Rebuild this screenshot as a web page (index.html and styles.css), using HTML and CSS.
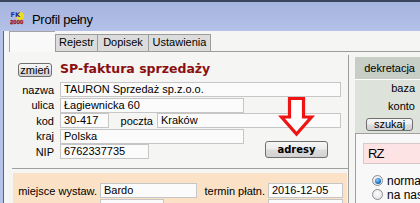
FILE: index.html
```html
<!DOCTYPE html>
<html lang="pl">
<head>
<meta charset="utf-8">
<title>Profil pełny</title>
<link rel="stylesheet" href="styles.css">
</head>
<body>
<div class="win">
  <div class="titlebar">
    <svg class="appicon" width="14" height="14" viewBox="0 0 14 14">
      <circle cx="10" cy="5" r="4" fill="#f0dc1c"/>
      <text x="0.5" y="6.3" class="ico-fk">FK</text>
      <text x="0" y="13.2" class="ico-yr">2000</text>
    </svg>
    <span class="title-text">Profil pełny</span>
  </div>
  <div class="frame">
    <div class="edge"></div>
    <div class="client">
      <div class="tabs">
        <div class="tab sel"></div>
        <div class="tab t1">Rejestr</div>
        <div class="tab t2">Dopisek</div>
        <div class="tab t3">Ustawienia</div>
        <div class="tab-fill"></div>
      </div>
      <div class="page">
        <div class="main">
          <div class="head">
            <button class="btn zmien">zmień</button>
            <span class="doc-title">SP-faktura sprzedaży</span>
          </div>
          <div class="form">
            <div class="row"><span class="lbl">nazwa</span><span class="box w-nazwa">TAURON Sprzedaż sp.z.o.o.</span></div>
            <div class="row"><span class="lbl">ulica</span><span class="box w-ulica">Łagiewnicka 60</span></div>
            <div class="row"><span class="lbl">kod</span><span class="box w-kod">30-417</span><span class="lbl-poczta">poczta</span><span class="box w-poczta">Kraków</span></div>
            <div class="pair">
              <div class="pair-rows">
                <div class="row"><span class="lbl">kraj</span><span class="box w-kraj">Polska</span></div>
                <div class="row"><span class="lbl">NIP</span><span class="box w-nip">6762337735</span></div>
              </div>
              <button class="btn adresy">adresy</button>
            </div>
          </div>
          <svg class="arrow" width="40" height="45" viewBox="0 0 40 45">
            <polygon points="11.5,3.5 25.5,3.5 25.5,22 33.5,22 18.5,39 3.5,22 11.5,22" fill="#ffffff" stroke="#ee1414" stroke-width="3.2" stroke-linejoin="miter"/>
          </svg>
          <div class="sep"></div>
          <div class="dates">
            <div class="drow"><span class="dl1">miejsce wystaw.</span><span class="box w-miejsce">Bardo</span><span class="dl2">termin płatn.</span><span class="box w-termin">2016-12-05</span></div>
            <div class="drow"><span class="dl1"></span><span class="box w-data"></span><span class="dl2"></span><span class="box w-termin"></span></div>
          </div>
        </div>
        <div class="vline"></div>
        <div class="side">
          <div class="side-head">dekretacja</div>
          <div class="side-body">
            <div class="side-line">baza</div>
            <div class="side-line">konto</div>
            <button class="btn szukaj">szukaj</button>
          </div>
          <div class="side-group">
            <div class="rz">RZ</div>
            <div class="radio-row"><span class="radio on"></span><span class="rtext">normalna</span></div>
            <div class="radio-row"><span class="radio"></span><span class="rtext">na nasz</span></div>
          </div>
        </div>
      </div>
    </div>
  </div>
</div>
</body>
</html>
```
FILE: styles.css
```css
* { box-sizing: border-box; }
html, body { margin: 0; padding: 0; }
body {
  width: 420px;
  height: 203px;
  overflow: hidden;
  font-family: "Liberation Sans", Arial, sans-serif;
  font-size: 11px;
  color: #000;
  background: #f5f5f3;
}
.win { width: 420px; height: 203px; display: flex; flex-direction: column; overflow: hidden; }

.titlebar {
  height: 31px;
  flex: none;
  border-top: 2px solid #3a4660;
  background: linear-gradient(#a5b4de, #b4c1e9);
  display: flex;
  align-items: flex-start;
  padding: 9px 0 0 10px;
}
.appicon { display: block; flex: none; }
.ico-fk { font-family: "DejaVu Sans", sans-serif; font-weight: bold; font-size: 6.5px; fill: #1a2db4; }
.ico-yr { font-family: "Liberation Sans", sans-serif; font-weight: bold; font-size: 6px; fill: #e01818; stroke: #701010; stroke-width: 0.3px; }
.title-text {
  margin-left: 8px;
  margin-top: 2px;
  font-size: 13px;
  line-height: 14px;
  letter-spacing: -0.3px;
  color: #000;
}

.frame { flex: 1; display: flex; min-height: 0; }
.edge { width: 4px; flex: none; background: #b5c3ea; border-right: 1px solid #5b6479; }
.client { flex: 1; padding-left: 5px; display: flex; flex-direction: column; min-width: 0; }

.tabs { height: 21px; flex: none; display: flex; align-items: flex-end; }
.tab {
  height: 18px;
  background: #dcdcdc;
  border: 1px solid #9c9c9c;
  border-left: none;
  line-height: 15px;
  text-align: center;
  white-space: nowrap;
}
.tab.sel {
  width: 46px;
  height: 21px;
  background: #f9f9f9;
  border: 1px solid #a4a4a4;
  border-right: none;
  border-bottom: none;
}
.tab.t1 { width: 43px; border-left: 1px solid #9c9c9c; }
.tab.t2 { width: 51px; }
.tab.t3 { width: 62px; }
.tab-fill { flex: 1; height: 1px; background: #9c9c9c; }

.page { flex: 1; display: flex; min-height: 0; }
.main { width: 336px; flex: none; margin-left: 3px; position: relative; padding-top: 11px; }
.vline { width: 1px; flex: none; background: #9c9c9c; margin-top: 3px; }
.side { width: 65px; flex: none; margin-left: 6px; display: flex; flex-direction: column; }

.btn {
  font-family: "Liberation Sans", Arial, sans-serif;
  font-size: 11px;
  color: #000;
  border: 1px solid #707070;
  border-radius: 3px;
  background: linear-gradient(#f6f6f6 0%, #ececec 48%, #dcdcdc 52%, #d2d2d2 100%);
  padding: 0;
  margin: 0;
  display: block;
  text-align: center;
}

.head { display: flex; align-items: center; height: 14px; padding-left: 6px; }
.zmien { width: 34px; height: 14px; line-height: 12px; }
.doc-title {
  margin-left: 8px;
  font-family: "DejaVu Sans", sans-serif;
  font-weight: bold;
  font-size: 12.5px;
  line-height: 14px;
  color: #8a1010;
  white-space: nowrap;
  position: relative;
  top: -1px;
}

.form { margin-top: 5px; display: flex; flex-direction: column; gap: 0.5px; }
.row { display: flex; height: 15px; align-items: center; }
.lbl { width: 42px; text-align: right; margin-right: 6px; white-space: nowrap; }
.box {
  height: 15px;
  border: 1px solid #c6c6c6;
  background: #fbfbfb;
  padding-left: 3px;
  line-height: 13px;
  white-space: nowrap;
  overflow: hidden;
}
.w-nazwa { width: 281px; }
.w-ulica { width: 184px; }
.w-kod { width: 49px; }
.lbl-poczta { width: 44px; text-align: right; margin-right: 4px; }
.w-poczta { width: 184px; }
.w-kraj { width: 184px; }
.w-nip { width: 89px; }

.pair { display: flex; align-items: flex-start; }
.pair-rows { display: flex; flex-direction: column; gap: 0.5px; }
.adresy {
  margin-left: 21px;
  margin-top: 12px;
  width: 63px;
  height: 17px;
  font-family: "DejaVu Sans", sans-serif;
  font-weight: bold;
  font-size: 10px;
  line-height: 15px;
}

.arrow { position: absolute; left: 266px; top: 43px; }

.sep { height: 1px; background: #a0a0a0; margin-top: 9px; }
.dates {
  margin-top: 4px;
  margin-left: 1px;
  width: 334px;
  height: 40px;
  background: #fbe1c6;
  padding-top: 10px;
  display: flex;
  flex-direction: column;
  gap: 1px;
}
.drow { display: flex; height: 15px; align-items: center; flex: none; }
.dl1 { width: 84px; text-align: right; margin-right: 3px; white-space: nowrap; }
.dl2 { width: 68px; text-align: right; margin-right: 3px; white-space: nowrap; }
.w-miejsce { width: 97px; }
.w-termin { width: 75px; }
.w-data { width: 64px; margin-right: 33px; }

.side-head {
  margin-top: 5px;
  height: 22px;
  background: #c6cec5;
  text-align: right;
  padding-right: 5px;
  line-height: 22px;
}
.side-body {
  border-top: 1px solid #ffffff;
  background: #dde3db;
  height: 54px;
  padding-right: 5px;
  display: flex;
  flex-direction: column;
  align-items: flex-end;
}
.side-line { line-height: 17.5px; height: 17.5px; }
.szukaj { width: 47px; height: 13px; line-height: 11px; margin-top: 3px; margin-right: 2px; }

.side-group {
  flex: 1;
  border-top: 1px solid #a0a0a0;
  border-left: 1px solid #a0a0a0;
  background: #f8f8f8;
  padding: 9px 0 0 7px;
  overflow: hidden;
}
.rz {
  height: 21px;
  width: 70px;
  background: #fde3e3;
  border: 1px solid #d8c8c8;
  font-size: 13px;
  letter-spacing: -1px;
  line-height: 19px;
  padding-left: 4px;
}
.radio-row {
  display: flex;
  align-items: center;
  height: 14px;
  padding-left: 9px;
  font-size: 12px;
  white-space: nowrap;
}
.rz + .radio-row { margin-top: 9.5px; }
.rtext { overflow: hidden; }
.radio {
  width: 11px;
  height: 11px;
  flex: none;
  border-radius: 50%;
  border: 1px solid #8a8e92;
  background: radial-gradient(circle at 50% 40%, #ffffff 0%, #e6e6e6 70%, #d4d4d4 100%);
  margin-right: 4px;
  position: relative;
}
.radio.on::after {
  content: "";
  position: absolute;
  left: 1.5px;
  top: 1.5px;
  width: 6px;
  height: 6px;
  border-radius: 50%;
  background: radial-gradient(circle at 40% 35%, #8fd0ff 0%, #2378cc 55%, #0b3f80 100%);
}
```
